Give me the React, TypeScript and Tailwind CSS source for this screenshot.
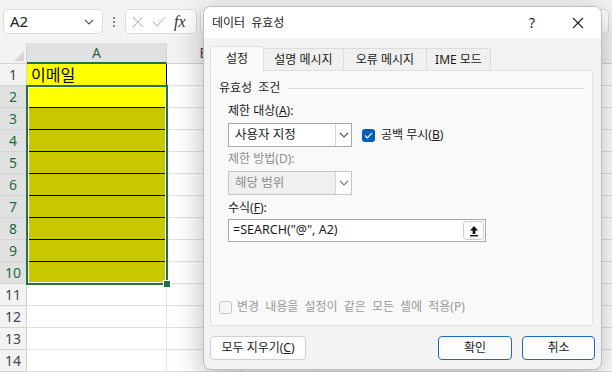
import React from "react";

const rows = [1, 2, 3, 4, 5, 6, 7, 8, 9, 10, 11, 12, 13, 14];

function Chevron({ className = "" }: { className?: string }) {
  return (
    <svg width="10" height="6" viewBox="0 0 10 6" className={className}>
      <path d="M1 1l4 4 4-4" fill="none" stroke="currentColor" strokeWidth="1.1" />
    </svg>
  );
}

function Toolbar() {
  return (
    <div className="h-[43px] bg-[#f3f3f3] flex items-start pt-[9px] pl-[3px] pr-[3px]">
      <div className="w-[100px] h-[25px] rounded-[5px] border border-[#dcdcdc] bg-white flex items-center justify-between pl-[6px] pr-[8px]">
        <span className="text-[15px] text-[#222]">A2</span>
        <Chevron className="text-[#555]" />
      </div>
      <div className="w-[22px] h-[25px] flex flex-col items-center justify-center gap-[2px]">
        <span className="w-[2px] h-[2px] bg-[#8a8a8a]" />
        <span className="w-[2px] h-[2px] bg-[#8a8a8a]" />
        <span className="w-[2px] h-[2px] bg-[#8a8a8a]" />
      </div>
      <div className="w-[72px] h-[25px] rounded-[5px] border border-[#dcdcdc] bg-white flex items-center pl-[6px] gap-[8px]">
        <svg width="12" height="12" viewBox="0 0 12 12">
          <path d="M1 1l10 10M11 1L1 11" stroke="#b3b3b3" strokeWidth="1" />
        </svg>
        <svg width="14" height="11" viewBox="0 0 14 11">
          <path d="M1 6l4 4 8-9" fill="none" stroke="#b3b3b3" strokeWidth="1" />
        </svg>
        <span className="font-['Liberation_Serif',serif] italic text-[16px] text-[#333] leading-none">fx</span>
      </div>
      <div className="ml-[3px] flex-1 h-[25px] rounded-[5px] border border-[#dcdcdc] bg-white" />
    </div>
  );
}

function Sheet() {
  return (
    <div className="relative">
      <div className="flex h-[21px]">
        <div className="relative w-[27px] bg-[#f3f3f3] border-r border-b border-[#d4d4d4]">
          <svg width="10" height="10" viewBox="0 0 10 10" className="absolute right-[2px] bottom-[2px]">
            <path d="M10 0v10H0z" fill="#d6d6d6" />
          </svg>
        </div>
        <div className="w-[140px] bg-[#e1e1e1] border-r border-[#d4d4d4] border-b-2 border-b-[#217346] flex items-center justify-center text-[14px] text-[#1e6b41]">
          A
        </div>
        <div className="w-[75px] bg-[#f3f3f3] border-r border-b border-[#d4d4d4] flex items-center justify-center text-[14px] text-[#444]">
          B
        </div>
        <div className="flex-1 bg-[#f3f3f3] border-b border-[#d4d4d4]" />
      </div>
      {rows.map((n) => {
        const sel = n >= 2 && n <= 10;
        const bordered = n <= 10;
        const fill = n === 1 || n === 2 ? "bg-[#ffff00]" : sel ? "bg-[#c8c800]" : "bg-white";
        return (
          <div key={n} className="flex h-[22px]">
            <div
              className={`w-[27px] border-r border-b border-[#d4d4d4] flex items-center justify-center text-[14px] ${
                sel ? "bg-[#e1e1e1] text-[#1e6b41]" : "bg-[#f3f3f3] text-[#3b4756]"
              }`}
            >
              {n}
            </div>
            <div
              className={`w-[140px] border-r border-b ${bordered ? "border-black" : "border-[#e1e1e1]"} ${fill} flex items-center pl-[4px] text-[16px] text-black`}
            >
              {n === 1 ? "이메일" : ""}
            </div>
            <div className="w-[75px] border-r border-b border-[#e1e1e1]" />
            <div className="w-[75px] border-r border-b border-[#e1e1e1]" />
            <div className="flex-1 border-b border-[#e1e1e1]" />
          </div>
        );
      })}
      <div className="absolute left-[26px] top-[42px] w-[142px] h-[200px] border-2 border-[#217346] shadow-[inset_0_0_0_1px_#ffffff]" />
      <div className="absolute left-[164px] top-[238px] w-[6px] h-[6px] bg-[#217346] outline outline-1 outline-white" />
    </div>
  );
}

function Check({ on, disabled }: { on?: boolean; disabled?: boolean }) {
  if (on)
    return (
      <span className="w-[13px] h-[13px] rounded-[3px] bg-[#005fb8] flex items-center justify-center">
        <svg width="9" height="7" viewBox="0 0 9 7">
          <path d="M1 3.5l2.3 2.3L8 1" fill="none" stroke="white" strokeWidth="1.2" />
        </svg>
      </span>
    );
  return (
    <span
      className={`w-[13px] h-[13px] rounded-[3px] border ${disabled ? "border-[#c8c8c8] bg-[#f6f6f6]" : "border-[#888] bg-white"}`}
    />
  );
}

function Dialog() {
  return (
    <div className="absolute left-[203px] top-[6px] w-[399px] h-[364px] rounded-[8px] border border-[#bdbdbd] bg-[#f3f3f3] shadow-[0_8px_30px_rgba(0,0,0,0.28)] overflow-hidden flex flex-col text-[12px] text-[#1b1b1b]">
      <div className="h-[31px] bg-white flex items-center pl-[8px]">
        <span className="[word-spacing:3px]">데이터 유효성</span>
        <span className="ml-auto w-[46px] text-center text-[14px]">?</span>
        <span className="w-[46px] flex justify-center">
          <svg width="12" height="12" viewBox="0 0 12 12">
            <path d="M1 1l10 10M11 1L1 11" stroke="#222" strokeWidth="1.1" />
          </svg>
        </span>
      </div>
      <div className="flex-1 px-[6px] pt-[8px] flex flex-col">
        <div className="flex items-end h-[24px] relative z-10">
          <div className="w-[54px] h-[25px] -mb-px bg-[#f9f9f9] border border-b-0 border-[#e0e0e0] rounded-t-[3px] flex items-center justify-center">
            설정
          </div>
          <div className="w-[80px] h-[22px] bg-[#f0f0f0] border border-l-0 border-b-0 border-[#dcdcdc] flex items-center justify-center">
            설명 메시지
          </div>
          <div className="w-[83px] h-[22px] bg-[#f0f0f0] border border-l-0 border-b-0 border-[#dcdcdc] flex items-center justify-center">
            오류 메시지
          </div>
          <div className="w-[64px] h-[22px] bg-[#f0f0f0] border border-l-0 border-b-0 border-[#dcdcdc] flex items-center justify-center">
            IME 모드
          </div>
        </div>
        <div className="w-[383px] h-[256px] bg-[#f9f9f9] border border-[#e0e0e0] rounded-[3px] flex flex-col px-[8px]">
          <div className="mt-[8px] h-[18px] flex items-center">
            <span className="[word-spacing:3px]">유효성 조건</span>
            <span className="ml-[7px] flex-1 h-px bg-[#dcdcdc]" />
          </div>
          <div className="pl-[9px] flex flex-col">
            <div className="mt-[5px] h-[18px] flex items-center">
              제한 대상(<u>A</u>):
            </div>
            <div className="mt-[3px] flex items-center">
              <div className="w-[124px] h-[24px] border border-[#a8a8a8] bg-white flex items-center">
                <span className="flex-1 pl-[6px] text-[12.5px]">사용자 지정</span>
                <span className="w-[16px] h-full border-l border-[#d6d6d6] flex items-center justify-center text-[#555]">
                  <Chevron />
                </span>
              </div>
              <span className="ml-[10px]">
                <Check on />
              </span>
              <span className="ml-[6px]">
                공백 무시(<u>B</u>)
              </span>
            </div>
            <div className="mt-[3px] h-[18px] flex items-center text-[#8d8d8d]">제한 방법(D):</div>
            <div className="mt-[3px] w-[124px] h-[24px] border border-[#c6c6c6] bg-[#f0f0f0] flex items-center text-[#8d8d8d]">
              <span className="flex-1 pl-[6px] text-[12.5px]">해당 범위</span>
              <span className="w-[16px] h-full border-l border-[#d6d6d6] bg-white flex items-center justify-center text-[#777]">
                <Chevron />
              </span>
            </div>
            <div className="mt-[4px] h-[18px] flex items-center">
              수식(<u>F</u>):
            </div>
            <div className="mt-[2px] w-[258px] h-[23px] border border-[#a8a8a8] bg-white flex items-center pl-[4px]">
              <span className="flex-1 text-[12.5px]">=SEARCH("@", A2)</span>
              <span className="w-[21px] h-[19px] mr-[1px] rounded-[3px] border border-[#cfcfcf] bg-[#fdfdfd] flex items-center justify-center">
                <svg width="10" height="12" viewBox="0 0 10 12">
                  <path d="M5 1L1 5.5h2.6V9h2.8V5.5H9z" fill="#111" />
                  <rect x="1" y="10" width="8" height="1.4" fill="#111" />
                </svg>
              </span>
            </div>
          </div>
          <div className="mt-auto mb-[9px] h-[18px] flex items-center text-[#9a9a9a]">
            <Check disabled />
            <span className="ml-[5px] [word-spacing:3px]">변경 내용을 설정이 같은 모든 셀에 적용(P)</span>
          </div>
        </div>
        <div className="mt-[10px] flex h-[24px]">
          <div className="w-[96px] rounded-[4px] border border-[#d0d0d0] bg-[#fdfdfd] flex items-center justify-center">
            모두 지우기(<u>C</u>)
          </div>
          <div className="ml-auto w-[74px] rounded-[4px] border border-[#1b6ac0] bg-[#fdfdfd] flex items-center justify-center">
            확인
          </div>
          <div className="ml-[10px] w-[73px] rounded-[4px] border border-[#1b6ac0] bg-[#fdfdfd] flex items-center justify-center">
            취소
          </div>
        </div>
      </div>
    </div>
  );
}

export default function App() {
  return (
    <div className="relative w-[612px] h-[372px] overflow-hidden bg-white font-['Noto_Sans','Noto_Sans_CJK_KR',sans-serif] leading-none">
      <Toolbar />
      <Sheet />
      <Dialog />
    </div>
  );
}
